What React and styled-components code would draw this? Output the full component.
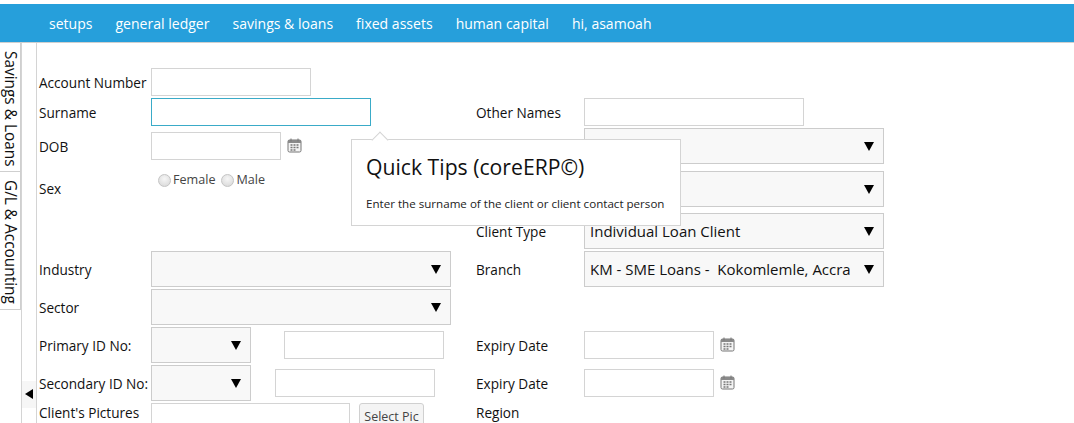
import React from "react";
import styled, { createGlobalStyle } from "styled-components";

const Global = createGlobalStyle`
  html, body { margin: 0; height: 423px; overflow: hidden; background: #fff; }
  body { font-family: "Open Sans", "Noto Sans", sans-serif; color: #111; }
  * { box-sizing: border-box; }
`;

const Page = styled.div`
  padding-top: 4px;
  height: 423px;
  overflow: hidden;
  display: flex;
  flex-direction: column;
`;
const NavBar = styled.nav`
  height: 39px;
  flex: none;
  background: #269fdb;
  border-bottom: 1px solid #cfcfcf;
  display: flex;
  align-items: center;
  gap: 23px;
  padding: 0 0 0 49px;
`;
const NavItem = styled.a`
  color: #fff;
  font-size: 14px;
  letter-spacing: 0.02px;
  white-space: nowrap;
`;
const Body = styled.div`
  flex: 1;
  display: flex;
  min-height: 0;
`;
const SideTabs = styled.div`
  width: 22px;
  flex: none;
  border-right: 1px solid #d4d4d4;
  display: flex;
  flex-direction: column;
  align-items: stretch;
`;
const SideTab = styled.div`
  width: 21px;
  height: ${(p) => p.$h}px;
  border-right: 1px solid #cfcfcf;
  border-bottom: 1px solid #cfcfcf;
  writing-mode: vertical-rl;
  font-size: 15.4px;
  line-height: 20px;
  padding-top: ${(p) => p.$top}px;
  color: #111;
  white-space: nowrap;
`;
const Splitter = styled.div`
  width: 15px;
  flex: none;
  border-right: 1px solid #d4d4d4;
  display: flex;
  flex-direction: column;
  padding-top: 338px;
`;
const Collapse = styled.div`
  height: 27px;
  background: #f6f6f6;
  display: flex;
  align-items: center;
  justify-content: center;
  padding: 0 0 2px 0;
`;
const Form = styled.div`
  position: relative;
  flex: 1;
  padding: 25px 0 0 2px;
`;
const Row = styled.div`
  display: grid;
  grid-template-columns: 112px 325px 108px 300px;
  height: ${(p) => p.$h}px;
  align-items: start;
`;
const Label = styled.label`
  display: block;
  font-size: 13.6px;
  line-height: 18px;
  white-space: nowrap;
  margin-top: ${(p) => p.$top || 0}px;
`;
const Field = styled.div`
  display: flex;
  align-items: flex-start;
  gap: ${(p) => p.$gap || 0}px;
  margin-top: ${(p) => p.$top || 0}px;
`;
const TextInput = styled.input`
  display: block;
  width: ${(p) => p.$w}px;
  height: 28px;
  flex: none;
  background: #fff;
  border: 1px solid ${(p) => (p.$focus ? "#3aabc8" : "#d4d4d4")};
  outline: none;
  padding: 0 6px;
  margin-left: ${(p) => p.$ml || 0}px;
`;
const SelectWrap = styled.div`
  position: relative;
  flex: none;
  width: ${(p) => p.$w}px;
  height: 36px;
  &::after {
    content: "";
    position: absolute;
    right: 10px;
    top: 14px;
    border-left: 5px solid transparent;
    border-right: 5px solid transparent;
    border-top: 9px solid #000;
    pointer-events: none;
  }
`;
const Select = styled.select`
  appearance: none;
  display: block;
  width: 100%;
  height: 100%;
  background: #f8f8f8;
  border: 1px solid #cccccc;
  border-radius: 0;
  outline: none;
  font-family: inherit;
  font-size: 15px;
  color: #111;
  padding: 0 32px 0 5px;
  opacity: 1;
`;
const CalButton = styled.span`
  display: inline-flex;
  margin: 6px 0 0 6px;
`;
const RadioGroup = styled.div`
  display: flex;
  align-items: center;
  margin: 1px 0 0 7px;
`;
const Radio = styled.input`
  appearance: none;
  width: 13px;
  height: 13px;
  margin: 0 2px 0 0;
  border-radius: 50%;
  border: 1px solid #c4c4c4;
  background: radial-gradient(circle at 50% 35%, #f6f6f6, #d6d6d6);
`;
const RadioLabel = styled.span`
  font-size: 12.6px;
  color: #444;
  margin-right: 6px;
  line-height: 16px;
`;
const PicButton = styled.button`
  flex: none;
  width: 65px;
  height: 26px;
  margin: 0 0 0 9px;
  background: #f4f4f4;
  border: 1px solid #d0d0d0;
  border-radius: 3px 3px 0 0;
  color: #444;
  font-family: inherit;
  font-size: 12.5px;
  padding: 0;
`;
const Tip = styled.div`
  position: absolute;
  left: 314px;
  top: 96px;
  width: 330px;
  height: 87px;
  background: #fff;
  border: 1px solid #d4d4d4;
  padding: 13px 14px;
  &::before {
    content: "";
    position: absolute;
    left: 22px;
    top: -6px;
    width: 11px;
    height: 11px;
    background: #fff;
    border-left: 1px solid #d4d4d4;
    border-top: 1px solid #d4d4d4;
    transform: rotate(45deg);
  }
`;
const TipTitle = styled.div`
  font-size: 21.2px;
  line-height: 28px;
  color: #111;
`;
const TipText = styled.div`
  font-size: 11.6px;
  line-height: 14px;
  margin-top: 16px;
  color: #222;
  white-space: nowrap;
`;

const Calendar = () => (
  <CalButton>
    <svg width="15" height="15" viewBox="0 0 15 15" fill="none">
      <rect x="1" y="2" width="13" height="12" rx="1.5" fill="#f4f4f4" stroke="#777" />
      <rect x="1" y="2" width="13" height="3" fill="#8a8a8a" />
      <path d="M4 0.5v3M11 0.5v3" stroke="#777" />
      <path d="M3.5 7h2M6.5 7h2M9.5 7h2M3.5 9.5h2M6.5 9.5h2M9.5 9.5h2M3.5 12h2M6.5 12h2" stroke="#777" strokeWidth="1.4" />
    </svg>
  </CalButton>
);

const Dropdown = ({ w = 300, value = "" }) => (
  <SelectWrap $w={w}>
    <Select value={value} onChange={() => {}}>
      <option value={value}>{value}</option>
    </Select>
  </SelectWrap>
);

const Arrow = () => (
  <svg width="8" height="10" viewBox="0 0 8 10">
    <path d="M8 0v10L0 5z" fill="#000" />
  </svg>
);

const navItems = ["setups", "general ledger", "savings & loans", "fixed assets", "human capital", "hi, asamoah"];

export default function App() {
  return (
    <Page>
      <Global />
      <NavBar>
        {navItems.map((n) => (
          <NavItem key={n}>{n}</NavItem>
        ))}
      </NavBar>
      <Body>
        <SideTabs>
          <SideTab $h={129} $top={8}>Savings &amp; Loans</SideTab>
          <SideTab $h={138} $top={8}>G/L &amp; Accounting</SideTab>
        </SideTabs>
        <Splitter>
          <Collapse><Arrow /></Collapse>
        </Splitter>
        <Form>
          <Row $h={30}>
            <Label $top={6}>Account Number</Label>
            <Field><TextInput $w={160} /></Field>
          </Row>
          <Row $h={30}>
            <Label $top={6}>Surname</Label>
            <Field><TextInput $w={220} $focus /></Field>
            <Label $top={6}>Other Names</Label>
            <Field><TextInput $w={220} /></Field>
          </Row>
          <Row $h={43}>
            <Label $top={10}>DOB</Label>
            <Field $top={4}><TextInput $w={130} /><Calendar /></Field>
            <span />
            <Dropdown />
          </Row>
          <Row $h={42}>
            <Label $top={9}>Sex</Label>
            <Field $top={0}>
              <RadioGroup>
                <Radio type="radio" name="sex" />
                <RadioLabel>Female</RadioLabel>
                <Radio type="radio" name="sex" />
                <RadioLabel>Male</RadioLabel>
              </RadioGroup>
            </Field>
            <span />
            <Dropdown />
          </Row>
          <Row $h={38}>
            <span />
            <span />
            <Label $top={10}>Client Type</Label>
            <Dropdown value="Individual Loan Client" />
          </Row>
          <Row $h={38}>
            <Label $top={10}>Industry</Label>
            <Dropdown />
            <Label $top={10}>Branch</Label>
            <Dropdown value={"KM - SME Loans - \u00a0Kokomlemle, Accra"} />
          </Row>
          <Row $h={38}>
            <Label $top={10}>Sector</Label>
            <Dropdown />
          </Row>
          <Row $h={38}>
            <Label $top={10}>Primary ID No:</Label>
            <Field $top={0}>
              <Dropdown w={100} />
              <Field $top={4}><TextInput $w={160} $ml={33} /></Field>
            </Field>
            <Label $top={10}>Expiry Date</Label>
            <Field $top={4}><TextInput $w={130} /><Calendar /></Field>
          </Row>
          <Row $h={38}>
            <Label $top={10}>Secondary ID No:</Label>
            <Field $top={0}>
              <Dropdown w={100} />
              <Field $top={4}><TextInput $w={160} $ml={24} /></Field>
            </Field>
            <Label $top={10}>Expiry Date</Label>
            <Field $top={4}><TextInput $w={130} /><Calendar /></Field>
          </Row>
          <Row $h={30}>
            <Label $top={1}>Client's Pictures</Label>
            <Field>
              <TextInput $w={199} />
              <PicButton>Select Pic</PicButton>
            </Field>
            <Label $top={1}>Region</Label>
          </Row>
          <Tip>
            <TipTitle>Quick Tips (coreERP©)</TipTitle>
            <TipText>Enter the surname of the client or client contact person</TipText>
          </Tip>
        </Form>
      </Body>
    </Page>
  );
}
